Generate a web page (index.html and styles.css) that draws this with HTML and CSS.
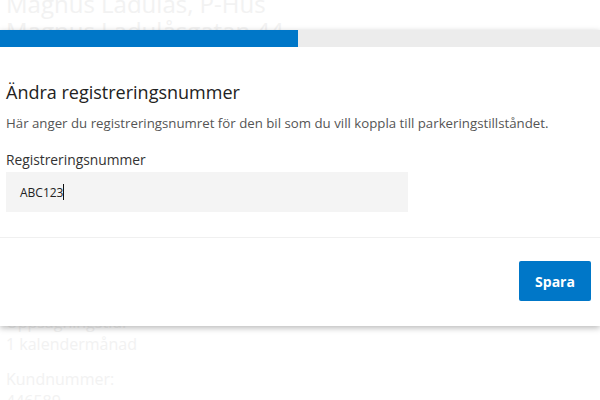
FILE: index.html
```html
<!DOCTYPE html>
<html lang="sv">
<head>
<meta charset="utf-8">
<link rel="stylesheet" href="styles.css">
</head>
<body>
<div class="page">
  <h1 class="bg-title">Magnus Ladulås, P-Hus<br>Magnus Ladulåsgatan 44</h1>
  <div class="bg-details">
    <p class="bg-item"><span class="bg-label">Uppsägningstid:</span><br>1 kalendermånad</p>
    <p class="bg-item"><span class="bg-label">Kundnummer:</span><br>446589</p>
  </div>
</div>
<div class="modal">
  <div class="progress"><div class="progress-fill" style="width:298px"></div></div>
  <div class="modal-body">
    <h2 class="modal-title">Ändra registreringsnummer</h2>
    <p class="modal-desc">Här anger du registreringsnumret för den bil som du vill koppla till parkeringstillståndet.</p>
    <label class="field-label" for="reg">Registreringsnummer</label>
    <div class="field"><span class="field-value">ABC123</span><span class="caret"></span></div>
  </div>
  <div class="modal-footer">
    <button class="btn-primary">Spara</button>
  </div>
</div>
</body>
</html>
```
FILE: styles.css
```css
html, body {
  margin: 0;
  padding: 0;
  background: #fff;
  font-family: "Open Sans", "Noto Sans", sans-serif;
  width: 600px;
  height: 400px;
  overflow: hidden;
}
.page {
  padding: 0 6px;
  color: #f2f2f2;
}
.bg-title {
  margin: -10px 0 0;
  font-size: 24px;
  font-weight: 400;
  line-height: 27px;
}
.bg-details {
  margin-top: 267px;
}
.bg-item {
  margin: 0 0 13px;
  font-size: 16px;
  line-height: 22px;
}
.modal {
  position: absolute;
  top: 30px;
  left: 0;
  width: 600px;
  background: #fff;
  box-shadow: 0 2px 6px rgba(0,0,0,0.28);
}
.progress {
  height: 17px;
  background: #ececec;
}
.progress-fill {
  height: 100%;
  background: #0077c8;
}
.modal-body {
  padding: 33px 6px 25px;
  border-bottom: 1px solid #f0f0f0;
}
.modal-title {
  margin: 0;
  font-size: 18px;
  font-weight: 400;
  line-height: 24px;
  color: #222;
}
.modal-desc {
  margin: 10px 0 0;
  font-size: 13.25px;
  line-height: 18px;
  color: #555;
}
.field-label {
  display: block;
  margin-top: 18px;
  font-size: 13.8px;
  line-height: 20px;
  color: #333;
}
.field {
  margin-top: 2px;
  width: 402px;
  height: 40px;
  background: #f4f4f4;
  display: flex;
  align-items: center;
  padding-left: 14px;
  box-sizing: border-box;
  font-size: 12px;
  color: #222;
}
.caret {
  display: inline-block;
  width: 1px;
  height: 16px;
  background: #111;
}
.modal-footer {
  display: flex;
  justify-content: flex-end;
  padding: 23px 9px 25px;
}
.btn-primary {
  width: 72px;
  height: 40px;
  border: none;
  border-radius: 2px;
  background: #0077c8;
  color: #fff;
  font-family: "Open Sans", sans-serif;
  font-weight: 700;
  font-size: 14px;
}
```
